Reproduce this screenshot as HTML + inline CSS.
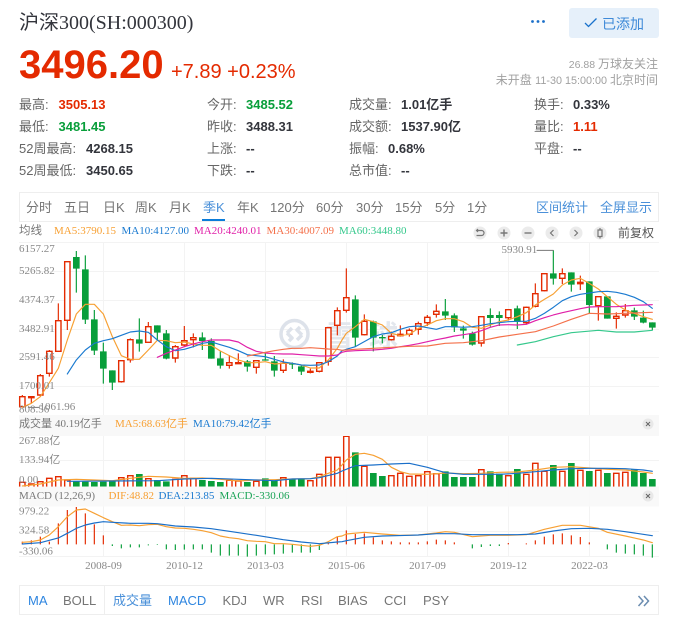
<!DOCTYPE html>
<html lang="zh-CN"><head><meta charset="utf-8"><title>沪深300</title>
<style>
html,body{margin:0;padding:0;background:#fff;width:685px;height:624px;overflow:hidden}
svg{display:block;position:absolute;left:0;top:0;filter:blur(.3px)}
text{font-family:"Liberation Sans","Noto Sans CJK SC",sans-serif;font-size:13px;fill:#666}
.s text,text.s,tspan.s{font-family:"Liberation Serif","Noto Sans CJK SC",serif;font-size:11px}
.v{font-weight:700;fill:#33353c}
.r{fill:#e42a00}.g{fill:#089e3a}
.t{font-size:13px;fill:#757575}
.b{font-size:13px;fill:#4a90d9}
</style></head><body>
<svg width="685" height="624" viewBox="0 0 685 624" xmlns="http://www.w3.org/2000/svg">
<!-- header -->
<text x="19" y="29" class="s" style="font-size:20px;fill:#33353c">沪深300(SH:000300)</text>
<text x="19" y="78" style="font-size:40px;font-weight:700;fill:#e42a00">3496.20</text>
<text x="171" y="78" style="font-size:20px;fill:#e42a00">+7.89 +0.23%</text>
<circle cx="532.5" cy="21.5" r="1.4" fill="#1a6fc9"/><circle cx="538" cy="21.5" r="1.4" fill="#1a6fc9"/><circle cx="543.5" cy="21.5" r="1.4" fill="#1a6fc9"/>
<rect x="569" y="8" width="90" height="30" rx="3" fill="#e6f0fa"/>
<path d="M585 23l3.500 3.500 8-8" fill="none" stroke="#1a72cc" stroke-width="1.300"/>
<text x="602" y="29" style="font-size:14px;fill:#3f8ad8">已添加</text>
<text x="658" y="68" text-anchor="end" style="font-size:12px;fill:#a0a0a0"><tspan style="font-size:10.5px">26.88 </tspan>万球友关注</text>
<text x="658" y="84" text-anchor="end" style="font-size:12px;fill:#a0a0a0">未开盘 <tspan style="font-size:10.8px">11-30 15:00:00 </tspan>北京时间</text>
<!-- stats -->
<text x="19" y="109">最高:</text><text x="58.500" y="109" class="v r">3505.13</text>
<text x="19" y="131">最低:</text><text x="58.500" y="131" class="v g">3481.45</text>
<text x="19" y="153">52周最高:</text><text x="86" y="153" class="v">4268.15</text>
<text x="19" y="175">52周最低:</text><text x="86" y="175" class="v">3450.65</text>
<text x="207" y="109">今开:</text><text x="246" y="109" class="v g">3485.52</text>
<text x="207" y="131">昨收:</text><text x="246" y="131" class="v">3488.31</text>
<text x="207" y="153">上涨:</text><text x="246" y="153" class="v">--</text>
<text x="207" y="175">下跌:</text><text x="246" y="175" class="v">--</text>
<text x="349" y="109">成交量:</text><text x="401" y="109" class="v">1.01亿手</text>
<text x="349" y="131">成交额:</text><text x="401" y="131" class="v">1537.90亿</text>
<text x="349" y="153">振幅:</text><text x="388" y="153" class="v">0.68%</text>
<text x="349" y="175">总市值:</text><text x="401" y="175" class="v">--</text>
<text x="534" y="109">换手:</text><text x="573" y="109" class="v">0.33%</text>
<text x="534" y="131">量比:</text><text x="573" y="131" class="v r">1.11</text>
<text x="534" y="153">平盘:</text><text x="573" y="153" class="v">--</text>
<!-- tabs -->
<rect x="19.500" y="192.500" width="639" height="29" fill="#fff" stroke="#eee"/>
<text x="26" y="212" class="t">分时</text><text x="64" y="212" class="t">五日</text><text x="103" y="212" class="t">日K</text><text x="135" y="212" class="t">周K</text><text x="169" y="212" class="t">月K</text>
<text x="203" y="212" class="t" style="fill:#4a90d9">季K</text><rect x="202" y="219" width="23" height="2" fill="#0a7cd9"/>
<text x="237" y="212" class="t">年K</text><text x="270" y="212" class="t">120分</text><text x="316" y="212" class="t">60分</text><text x="356" y="212" class="t">30分</text><text x="395" y="212" class="t">15分</text><text x="435" y="212" class="t">5分</text><text x="467" y="212" class="t">1分</text>
<text x="536" y="212" class="b">区间统计</text><text x="600" y="212" class="b">全屏显示</text>
<!-- legend -->
<g class="s">
<text x="19" y="234" style="font-size:11.500px;fill:#777">均线</text>
<text x="54" y="234" style="fill:#f7a033">MA5:3790.15</text>
<text x="121.500" y="234" style="fill:#1a7ad0">MA10:4127.00</text>
<text x="194" y="234" style="fill:#e020a8">MA20:4240.01</text>
<text x="266.500" y="234" style="fill:#f4704a">MA30:4007.09</text>
<text x="339" y="234" style="fill:#35c88c">MA60:3448.80</text>
</g>
<g fill="#ebebeb"><circle cx="480" cy="233" r="6.500"/><circle cx="504" cy="233" r="6.500"/><circle cx="528" cy="233" r="6.500"/><circle cx="552" cy="233" r="6.500"/><circle cx="576" cy="233" r="6.500"/><circle cx="600" cy="233" r="6.500"/></g>
<g fill="none" stroke="#777" stroke-width="1.200">
<path d="M476.500 230.500h5a2.500 2.500 0 0 1 0 5h-5M478 229l-1.500 1.500 1.500 1.500"/>
<path d="M500.500 233h7M504 229.500v7" stroke-width="1.400"/>
<path d="M524.500 233h7" stroke-width="1.400"/>
<path d="M553.500 230l-3 3 3 3"/>
<path d="M574.500 230l3 3-3 3"/>
<path d="M598 230h4v6.500h-4zM600 228v2M600 236.500v2"/>
</g>
<text x="618" y="237" style="font-size:12px;fill:#555">前复权</text>
<!-- grid -->
<g stroke="#f3f3f3" stroke-width="1" fill="none">
<path d="M19 242.500H659M19 271.500H659M19 300.500H659M19 329.500H659M19 357.500H659M19 386.500H659M19 460.500H659M19 531.500H659M19 556.500H659"/>
<path d="M103.500 242V556M184.500 242V556M265.500 242V556M346.500 242V556M427.500 242V556M508.500 242V556M589.500 242V556"/>
</g>
<!-- watermark -->
<g fill="none" stroke="#dde2ea" stroke-width="3.500" stroke-linejoin="round"><circle cx="294.500" cy="334" r="13.500"/><path d="M287 333l5 5-3 3M292 328l-5 5M302 335l-5-5 3-3M297 340l5-5"/></g>
<text x="325" y="346" style="font-size:29px;letter-spacing:15px;fill:#e3e7ed;font-weight:700">雪球</text>
<g transform="scale(.33333)">
<!-- price chart left -->
<g transform="translate(0,570)">
<path stroke="#e42a00" stroke-width="3.500" fill="none" d="M67 615V652M94 618V640M121 552V618M148 480V560M175 340V484M202 215V420M364 512V578M391 445V518M445 396V457M526 465V518M553 408V470M580 430V472M688 495V536M715 490V521M769 510V551M850 508V549M931 536V550M958 518V547M985 413V527M1012 352V436"/>
<path stroke="#e42a00" stroke-width="4.200" fill="#fff" d="M59 620h16v30h-16zM86 620h16v3h-16zM113 557h16v58h-16zM140 484h16v66h-16zM167 392h16v92h-16zM194 215h16v176h-16zM356 512h16v63h-16zM383 449h16v60h-16zM437 410h16v47h-16zM518 470h16v34h-16zM545 452h16v13h-16zM572 443h16v6h-16zM680 518h16v8h-16zM707 518h16v3h-16zM761 512h16v20h-16zM842 520h16v21h-16zM923 544h16v3h-16zM950 518h16v26h-16zM977 413h16v101h-16zM1004 362h16v44h-16z"/>
<path stroke="#089e3a" stroke-width="3.500" fill="none" d="M229 183V308M256 196V402M283 360V495M310 458V581M337 541V600M418 385V485M472 406V450M499 420V508M607 427V480M634 445V506M661 484V536M742 510V545M796 490V512M823 498V560M877 517V537M904 525V555"/>
<path fill="#089e3a" d="M219 201h20v35h-20zM246 238h20v151h-20zM273 388h20v94h-20zM300 484h20v52h-20zM327 541h20v37h-20zM408 448h20v13h-20zM462 406h20v22h-20zM489 430h20v76h-20zM597 442h20v11h-20zM624 453h20v53h-20zM651 505h20v22h-20zM732 514h20v16h-20zM786 508h20v4h-20zM813 514h20v28h-20zM867 520h20v4h-20zM894 529h20v16h-20z"/>
</g>
<!-- price chart right -->
<g transform="translate(1026,570)">
<path stroke="#e42a00" stroke-width="3.500" fill="none" d="M13 235V368M67 373V436M148 425V452M175 406V440M202 415V440M229 395V434M256 375V408M283 343V383M418 378V470M499 358V392M553 350V404M580 280V352M607 250V304M661 235V282M715 257V300M769 318V392M823 367V416M850 342V383"/>
<path stroke="#e42a00" stroke-width="4.200" fill="#fff" d="M5 323h16v38h-16zM59 394h16v40h-16zM140 439h16v10h-16zM167 433h16v4h-16zM194 421h16v12h-16zM221 401h16v17h-16zM248 382h16v16h-16zM275 364h16v9h-16zM410 380h16v79h-16zM491 359h16v24h-16zM545 352h16v46h-16zM572 311h16v38h-16zM599 251h16v51h-16zM653 251h16v14h-16zM707 277h16v4h-16zM761 320h16v27h-16zM815 379h16v6h-16zM842 362h16v13h-16z"/>
<path stroke="#089e3a" stroke-width="3.500" fill="none" d="M40 316V470M94 392V484M121 435V460M310 327V390M337 370V426M364 407V446M391 425V467M445 355V410M472 364V408M526 347V417M634 181V284M688 247V305M742 274V372M796 319V386M877 353V390M904 362V400M931 397V420"/>
<path fill="#089e3a" d="M30 328h20v115h-20zM84 394h20v49h-20zM111 441h20v4h-20zM300 364h20v13h-20zM327 376h20v36h-20zM354 415h20v7h-20zM381 430h20v34h-20zM435 375h20v9h-20zM462 375h20v9h-20zM516 355h20v41h-20zM624 250h20v16h-20zM678 247h20v37h-20zM732 274h20v71h-20zM786 319h20v67h-20zM867 361h20v19h-20zM894 383h20v15h-20zM921 397h20v16h-20z"/>
</g>
<!-- MA lines -->
<g fill="none" stroke-width="3.500" stroke-linejoin="round" stroke-linecap="round">
<g transform="translate(0,570)">
<path stroke="#f7a033" d="M67 652L94 640 121 620 148 578 175 535 202 450 229 372 256 343 283 343 310 372 337 440 364 497 391 508 418 508 445 480 472 451 499 452 526 458 553 456 580 462 607 466 634 466 661 483 688 497 715 510 742 518 769 518 796 515 823 522 850 520 877 520 904 525 931 534 958 534 985 510 1012 475 1026 450 1039 430 1066 410 1093 388 1120 395 1147 405 1174 430 1201 437 1228 433 1255 415 1282 405 1309 392 1336 386 1363 386 1390 395 1417 412 1444 415 1471 405 1498 395 1525 390 1552 380 1579 368 1606 345 1633 328 1660 312 1687 285 1714 270 1741 265 1768 280 1795 297 1822 320 1849 343 1876 360 1903 370 1930 380 1957 388"/>
<path stroke="#1a7ad0" d="M202 552L229 510 256 480 283 460 310 452 337 446 364 436 391 426 418 423 445 427 472 450 499 470 526 482 553 478 580 470 607 460 634 456 661 464 688 472 715 482 742 494 769 497 796 500 823 508 850 516 877 520 904 525 931 526 958 525 985 515 1012 498 1026 482 1039 478 1066 470 1093 455 1120 440 1147 432 1174 428 1201 418 1228 410 1255 408 1282 413 1309 418 1336 410 1363 410 1390 412 1417 410 1444 406 1471 401 1498 398 1525 395 1552 394 1579 394 1606 385 1633 370 1660 352 1687 332 1714 320 1741 313 1768 309 1795 305 1822 304 1849 307 1876 313 1903 322 1930 335 1957 355"/>
<path stroke="#e020a8" d="M472 502L499 490 526 480 553 470 580 462 607 455 634 450 661 450 688 450 715 456 742 472 769 484 796 489 823 491 850 492 877 492 904 494 931 496 958 498 985 498 1012 495 1026 487 1039 484 1066 482 1093 481 1120 480 1147 478 1174 475 1201 470 1228 466 1255 461 1282 455 1309 449 1336 444 1363 438 1390 434 1417 430 1444 422 1471 412 1498 405 1525 404 1552 405 1579 403 1606 392 1633 383 1660 375 1687 368 1714 362 1741 356 1768 351 1795 350 1822 350 1849 350 1876 348 1903 346 1930 345 1957 344"/>
<path stroke="#f4704a" d="M742 498L769 493 796 487 823 482 850 478 877 475 904 475 931 473 958 475 985 477 1012 478 1026 481 1066 478 1120 475 1174 472 1228 469 1282 468 1336 460 1390 458 1444 452 1498 441 1552 433 1606 425 1660 408 1714 388 1768 370 1822 372 1876 370 1957 367"/>
<path stroke="#35c88c" d="M1552 465L1606 455 1660 440 1714 428 1795 421 1849 426 1903 426 1957 421"/>
</g>
<path stroke="#777" stroke-width="3" d="M85 1222H118M1611 751H1660"/>
</g>
<!-- volume -->
<g transform="translate(0,1230)">
<path fill="#089e3a" d="M219 214h20v16h-20zM246 215h20v15h-20zM273 216h20v14h-20zM300 215h20v15h-20zM327 214h20v16h-20zM408 192h20v38h-20zM462 210h20v20h-20zM489 214h20v16h-20zM597 210h20v20h-20zM624 213h20v17h-20zM651 216h20v14h-20zM732 216h20v14h-20zM786 205h20v25h-20zM813 212h20v18h-20zM867 208h20v22h-20zM894 208h20v22h-20z"/>
<path stroke="#e42a00" stroke-width="4.200" fill="#fff" d="M59 231V217H75V231M86 231V222H102V231M113 231V215H129V231M140 231V205H156V231M167 231V200H183V231M194 231V210H210V231M356 231V203H372V231M383 231V197H399V231M437 231V206H453V231M518 231V208H534V231M545 231V197H561V231M572 231V205H588V231M680 231V211H696V231M707 231V213H723V231M761 231V214H777V231M842 231V203H858V231M923 231V212H939V231M950 231V193H966V231M977 231V142H993V231M1004 231V142H1020V231"/>
</g>
<g transform="translate(1026,1230)">
<path fill="#089e3a" d="M30 127h20v103h-20zM84 189h20v41h-20zM111 198h20v32h-20zM300 184h20v46h-20zM327 201h20v29h-20zM354 201h20v29h-20zM381 201h20v29h-20zM435 184h20v46h-20zM462 191h20v39h-20zM516 177h20v53h-20zM624 165h20v65h-20zM678 159h20v71h-20zM732 183h20v47h-20zM786 189h20v41h-20zM867 179h20v51h-20zM894 189h20v41h-20zM921 207h20v23h-20z"/>
<path stroke="#e42a00" stroke-width="4.200" fill="#fff" d="M5 231V79H21V231M59 231V169H75V231M140 231V197H156V231M167 231V190H183V231M194 231V199H210V231M221 231V197H237V231M248 231V185H264V231M275 231V191H291V231M410 231V179H426V231M491 231V197H507V231M545 231V193H561V231M572 231V160H588V231M599 231V184H615V231M653 231V184H669V231M707 231V181H723V231M761 231V181H777V231M815 231V190H831V231M842 231V187H858V231"/>
</g>
<g transform="translate(0,1230)" fill="none" stroke-width="3.500" stroke-linejoin="round" stroke-linecap="round">
<path stroke="#f7a033" d="M67 228L121 222 175 210 229 208 283 210 337 212 391 205 445 199 499 201 553 205 607 204 661 208 715 213 769 210 823 209 877 207 931 206 958 200 985 190 1012 180 1026 165 1039 150 1066 133 1093 130 1120 136 1147 148 1174 172 1201 185 1228 192 1282 193 1336 189 1390 191 1444 190 1498 187 1552 186 1606 180 1660 172 1714 170 1768 174 1822 178 1876 180 1930 186 1957 190"/>
<path stroke="#1a6fc9" d="M202 214L472 212 553 207 634 205 715 208 823 212 877 207 931 206 958 203 1012 190 1026 183 1066 167 1120 165 1174 162 1228 160 1282 172 1336 188 1390 193 1498 193 1552 190 1606 185 1660 180 1714 176 1768 175 1822 175 1876 176 1930 180 1957 184"/>
</g>
<!-- MACD bars -->
<g transform="translate(0,1230)" stroke-width="3.500" fill="none">
<path stroke="#e42a00" d="M67 403V395M94 403V391M121 403V380M148 403V395M175 403V340M202 403V300M229 403V291M256 403V310M283 403V343M310 403V376M985 403V400M1012 403V380M1039 403V361M1066 403V372M1093 403V370M1120 403V382M1147 403V391M1174 403V394M1201 403V397M1228 403V397M1255 403V397M1282 403V394M1309 403V389M1336 403V391M1363 403V397M1525 403V399M1579 403V400M1606 403V391M1633 403V380M1660 403V373M1687 403V370M1714 403V376M1741 403V381M1768 403V397"/>
<path stroke="#089e3a" d="M337 403V408M364 403V415M391 403V412M418 403V412M445 403V406M472 403V405M499 403V418M526 403V420M553 403V419M580 403V418M607 403V418M634 403V428M661 403V437M688 403V437M715 403V437M742 403V440M769 403V437M796 403V433M823 403V433M850 403V431M877 403V428M904 403V428M931 403V428M958 403V420M1417 403V415M1444 403V411M1471 403V408M1498 403V408M1822 403V418M1849 403V428M1876 403V431M1903 403V433M1930 403V437M1957 403V443"/>
</g>
<g transform="translate(0,1230)" fill="none" stroke-width="3.500" stroke-linejoin="round" stroke-linecap="round">
<path stroke="#f7a033" d="M67 397L94 395 121 390 148 375 175 350 202 320 229 300 256 297 283 310 310 323 337 335 364 346 391 345 418 347 445 344 472 343 499 350 526 354 553 355 580 358 607 362 634 368 661 378 688 383 715 386 742 392 769 394 796 395 823 401 850 401 877 403 904 406 931 409 958 406 985 395 1012 380 1026 378 1039 372 1093 367 1147 372 1201 376 1255 375 1309 369 1336 365 1363 367 1417 380 1471 376 1525 376 1579 374 1633 358 1687 346 1741 346 1795 355 1822 367 1876 378 1930 390 1957 398"/>
<path stroke="#1a6fc9" d="M67 402L121 398 175 384 202 370 229 355 256 345 283 339 310 335 337 337 391 340 445 340 472 341 526 348 580 351 634 356 688 364 769 376 850 389 904 396 958 401 1012 396 1026 395 1039 392 1093 382 1147 378 1228 376 1255 375 1309 371 1363 371 1417 374 1552 374 1606 372 1660 363 1714 356 1768 355 1822 358 1876 365 1957 377"/>
</g>
</g>
<!-- panel headers -->
<rect x="19" y="415" width="640" height="21" fill="#f8f8f8"/>
<rect x="19" y="486.500" width="640" height="20" fill="#f8f8f8" fill-opacity=".85"/>
<circle cx="648" cy="424" r="5.500" fill="#e8e8e8"/><path d="M646 422l4 4M650 422l-4 4" stroke="#666" stroke-width="1"/>
<circle cx="648" cy="496" r="5.500" fill="#e8e8e8"/><path d="M646 494l4 4M650 494l-4 4" stroke="#666" stroke-width="1"/>
<!-- axis labels -->
<g class="s">
<text x="19" y="252" style="fill:#888">6157.27</text>
<text x="19" y="274" style="fill:#888">5265.82</text>
<text x="19" y="303" style="fill:#888">4374.37</text>
<text x="19" y="332" style="fill:#888">3482.91</text>
<text x="19" y="360" style="fill:#888">2591.46</text>
<text x="19" y="389" style="fill:#888">1700.01</text>
<text x="19" y="412.500" style="fill:#888">808.56</text>
<text x="39.500" y="410" style="fill:#888">1061.96</text>
<text x="501.500" y="253" style="fill:#888">5930.91</text>
<text x="19" y="427" style="fill:#777">成交量</text><text x="55" y="427" style="fill:#777">40.19亿手</text>
<text x="115" y="427" style="fill:#f7a033">MA5:68.63亿手</text>
<text x="193" y="427" style="fill:#1a7ad0">MA10:79.42亿手</text>
<text x="19" y="444" style="fill:#888">267.88亿</text>
<text x="19" y="463" style="fill:#888">133.94亿</text>
<text x="19" y="483" style="fill:#888">0.00</text>
<text x="19" y="499" style="fill:#777">MACD (12,26,9)</text>
<text x="108.500" y="499" style="fill:#f7a033">DIF:48.82</text>
<text x="158.500" y="499" style="fill:#1a7ad0">DEA:213.85</text>
<text x="219.500" y="499" style="fill:#1aa356">MACD:-330.06</text>
<text x="19" y="514.500" style="fill:#888">979.22</text>
<text x="19" y="533.500" style="fill:#888">324.58</text>
<text x="19" y="554.500" style="fill:#888">-330.06</text>
<g text-anchor="middle">
<text x="103.500" y="569" style="fill:#888">2008-09</text>
<text x="184.500" y="569" style="fill:#888">2010-12</text>
<text x="265.500" y="569" style="fill:#888">2013-03</text>
<text x="346.500" y="569" style="fill:#888">2015-06</text>
<text x="427.500" y="569" style="fill:#888">2017-09</text>
<text x="508.500" y="569" style="fill:#888">2019-12</text>
<text x="589.500" y="569" style="fill:#888">2022-03</text>
</g>
</g>
<!-- bottom tabs -->
<rect x="19.500" y="585.500" width="639" height="29" fill="#fff" stroke="#eee"/>
<path d="M104.500 585V615" stroke="#eee"/>
<text x="28" y="605" class="t" style="fill:#2f86e0">MA</text>
<text x="63" y="605" class="t">BOLL</text>
<text x="113" y="605" class="b">成交量</text>
<text x="168" y="605" class="t" style="fill:#2f86e0">MACD</text>
<text x="222.500" y="605" class="t">KDJ</text>
<text x="263" y="605" class="t">WR</text>
<text x="301" y="605" class="t">RSI</text>
<text x="338" y="605" class="t">BIAS</text>
<text x="384" y="605" class="t">CCI</text>
<text x="423" y="605" class="t">PSY</text>
<path d="M638.500 596l4.500 5-4.500 5M644 596l4.500 5-4.500 5" fill="none" stroke="#6a8cb0" stroke-width="1.500"/>
</svg>
</body></html>
